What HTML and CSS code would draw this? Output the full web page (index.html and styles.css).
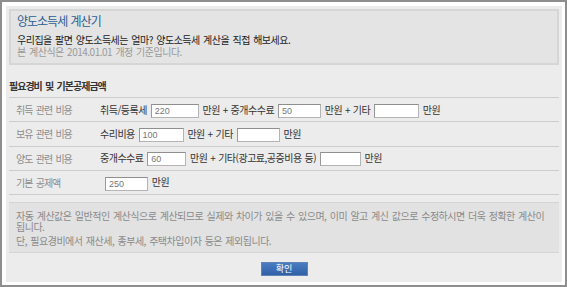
FILE: index.html
```html
<!DOCTYPE html>
<html lang="ko">
<head>
  <meta charset="UTF-8" />
  <meta name="viewport" content="width=device-width, initial-scale=1.0"/>
  <title>양도소득세 계산기</title>
  <link rel="stylesheet" href="styles.css">
</head>
<body>
  <div class="frame">
    <div class="panel">
      <div class="intro">
        <h1 class="intro-title">양도소득세 계산기</h1>
        <p class="intro-lead">우리집을 팔면 양도소득세는 얼마? 양도소득세 계산을 직접 해보세요.</p>
        <p class="intro-note">본 계산식은 2014.01.01 개정 기준입니다.</p>
      </div>

      <h2 class="section-title">필요경비 및 기본공제금액</h2>

      <table class="cost-table">
        <tr>
          <th>취득 관련 비용</th>
          <td>
            취득/등록세 <input class="amount w48" type="text" value="220"> 만원 + 중개수수료
            <input class="amount w43" type="text" value="50"> 만원 + 기타
            <input class="amount w45" type="text" value=""> 만원
          </td>
        </tr>
        <tr>
          <th>보유 관련 비용</th>
          <td>
            수리비용 <input class="amount w45" type="text" value="100"> 만원 + 기타
            <input class="amount w43" type="text" value=""> 만원
          </td>
        </tr>
        <tr>
          <th>양도 관련 비용</th>
          <td>
            중개수수료 <input class="amount w39" type="text" value="60"> 만원 + 기타(광고료,공증비용 등)
            <input class="amount w41" type="text" value=""> 만원
          </td>
        </tr>
        <tr>
          <th>기본 공제액</th>
          <td class="indent">
            <input class="amount w43" type="text" value="250"> 만원
          </td>
        </tr>
      </table>

      <div class="notice">
        <p>자동 계산값은 일반적인 계산식으로 계산되므로 실제와 차이가 있을 수 있으며, 이미 알고 계신 값으로 수정하시면 더욱 정확한 계산이 됩니다.</p>
        <p>단, 필요경비에서 재산세, 종부세, 주택차입이자 등은 제외됩니다.</p>
      </div>

      <div class="actions">
        <button class="btn-confirm" type="button">확인</button>
      </div>
    </div>
  </div>
</body>
</html>
```

FILE: styles.css
```css
body {
  margin: 0;
  font-family: "Noto Sans CJK KR", "Noto Sans", sans-serif;
  background: #fff;
}

.frame {
  width: 567px;
  height: 287px;
  box-sizing: border-box;
  border: 2px solid #8e8e8e;
  padding: 4px 3px 3px 4px;
  background: #fff;
}

.panel {
  height: 100%;
  box-sizing: border-box;
  padding: 3px 3px 0;
  background: #ececec;
}

.intro {
  height: 56px;
  box-sizing: border-box;
  padding: 3px 6px;
  border: 2px solid #d6d6d6;
  background: #e4e4e4;
}

.intro-title {
  margin: 0;
  font-size: 12px;
  line-height: 14px;
  font-weight: normal;
  letter-spacing: -1px;
  word-spacing: 1px;
  color: #2b5e93;
}

.intro-lead,
.intro-note {
  margin: 0;
  font-size: 10px;
  line-height: 12px;
  letter-spacing: -0.5px;
  word-spacing: 1px;
}

.intro-lead {
  margin-top: 6px;
  color: #222;
}

.intro-note {
  color: #9a9a9a;
}

.section-title {
  margin: 15px 0 5px;
  font-size: 10px;
  line-height: 12px;
  font-weight: bold;
  letter-spacing: -1px;
  word-spacing: 1.5px;
  color: #333;
}

.cost-table {
  width: 100%;
  border-collapse: collapse;
  border-top: 1px solid #cdcdcd;
}

.cost-table th,
.cost-table td {
  height: 23.3px;
  padding: 0;
  border-bottom: 1px solid #cdcdcd;
  font-size: 10px;
  white-space: nowrap;
}

.cost-table th {
  width: 84px;
  padding-left: 7px;
  text-align: left;
  font-weight: normal;
  letter-spacing: -1px;
  word-spacing: 1.5px;
  color: #8d8d8d;
}

.cost-table td {
  letter-spacing: -0.5px;
  word-spacing: 0.5px;
  color: #333;
}

.cost-table td.indent {
  padding-left: 4px;
}

.amount {
  height: 14px;
  box-sizing: border-box;
  margin: 0 1px;
  padding: 0 3px;
  border: 1px solid #b4b4b4;
  border-top-color: #8f8f8f;
  border-left-color: #999;
  background: #fff;
  font-family: "Liberation Sans", sans-serif;
  font-size: 9px;
  letter-spacing: 0;
  color: #777;
  vertical-align: middle;
}

.w39 { width: 39px; }
.w41 { width: 41px; }
.w43 { width: 43px; }
.w45 { width: 45px; }
.w48 { width: 48px; }

.notice {
  margin-top: 7px;
  padding: 7px 7px 6px;
  border-top: 1px solid #d4d4d4;
  border-bottom: 1px solid #d4d4d4;
  background: #e2e2e2;
}

.notice p {
  margin: 0;
  font-size: 10px;
  line-height: 11px;
  letter-spacing: -0.5px;
  word-spacing: 1px;
  color: #8a8a8a;
}

.notice p + p {
  margin-top: 3px;
}

.actions {
  display: flex;
  justify-content: center;
  margin-top: 9px;
}

.btn-confirm {
  width: 47px;
  height: 14px;
  padding: 0;
  border: 1px solid #5f83b8;
  background: linear-gradient(#4a7cc2, #3060a6);
  font-family: "Noto Sans CJK KR", sans-serif;
  font-size: 9px;
  line-height: 12px;
  color: #fff;
}
```
